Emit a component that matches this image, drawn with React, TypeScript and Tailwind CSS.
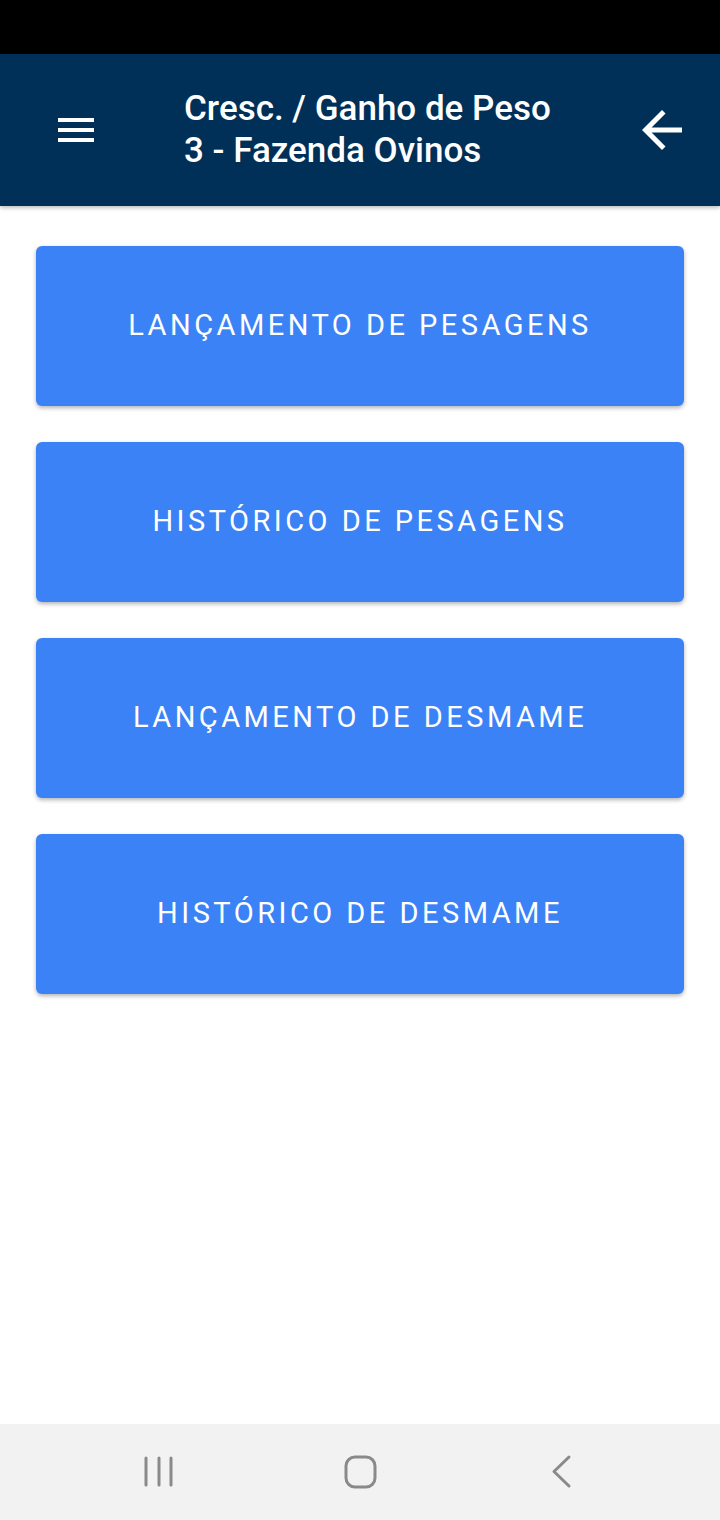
const ITEMS = [
  "LANÇAMENTO DE PESAGENS",
  "HISTÓRICO DE PESAGENS",
  "LANÇAMENTO DE DESMAME",
  "HISTÓRICO DE DESMAME",
];

function MenuIcon() {
  return (
    <svg viewBox="0 0 24 24" className="h-12 w-12" fill="white">
      <path d="M3 18h18v-2H3v2zm0-5h18v-2H3v2zm0-7v2h18V6H3z" />
    </svg>
  );
}

function BackIcon() {
  return (
    <svg viewBox="0 0 24 24" className="h-[60px] w-[60px]" fill="white">
      <path d="M20 11H7.83l5.59-5.59L12 4l-8 8 8 8 1.41-1.41L7.83 13H20v-2z" />
    </svg>
  );
}

function NavBar() {
  return (
    <div className="flex h-[96px] items-center justify-center gap-[161px] bg-[#f2f2f2]">
      <svg width="40" height="40" viewBox="0 0 40 40" fill="none" stroke="#8a8a8a" strokeWidth="3" strokeLinecap="round">
        <path d="M7 6v27M20 6v27M32 6v27" />
      </svg>
      <svg width="40" height="40" viewBox="0 0 40 40" fill="none" stroke="#8a8a8a" strokeWidth="3">
        <rect x="6" y="5" width="29" height="30" rx="9" />
      </svg>
      <svg width="40" height="40" viewBox="0 0 40 40" fill="none" stroke="#8a8a8a" strokeWidth="3" strokeLinecap="round" strokeLinejoin="round">
        <path d="M28 5L13 19.5L28 34" />
      </svg>
    </div>
  );
}

export default function App() {
  return (
    <div className="flex h-[1520px] flex-col bg-white" style={{ fontFamily: "Roboto, 'Noto Sans', sans-serif" }}>
      <div className="h-[54px] bg-black" />
      <header className="relative z-10 flex h-[152px] items-center bg-[#003057] shadow-[0_2px_4px_rgba(0,0,0,0.25)]">
        <div className="ml-[52px] flex items-center">
          <MenuIcon />
        </div>
        <div className="ml-[84px] flex-1 text-[35px] font-medium leading-[42px] text-white">
          <div>Cresc. / Ganho de Peso</div>
          <div>3 - Fazenda Ovinos</div>
        </div>
        <div className="mr-[28px] flex items-center">
          <BackIcon />
        </div>
      </header>
      <main className="flex flex-1 flex-col gap-[36px] px-[36px] pt-[40px]">
        {ITEMS.map((label) => (
          <button
            key={label}
            className="flex h-[160px] items-center justify-center rounded-[6px] bg-[#3b82f6] text-[29px] tracking-[0.12em] text-white shadow-[0_2px_4px_rgba(0,0,0,0.3)]"
          >
            {label}
          </button>
        ))}
      </main>
      <NavBar />
    </div>
  );
}
